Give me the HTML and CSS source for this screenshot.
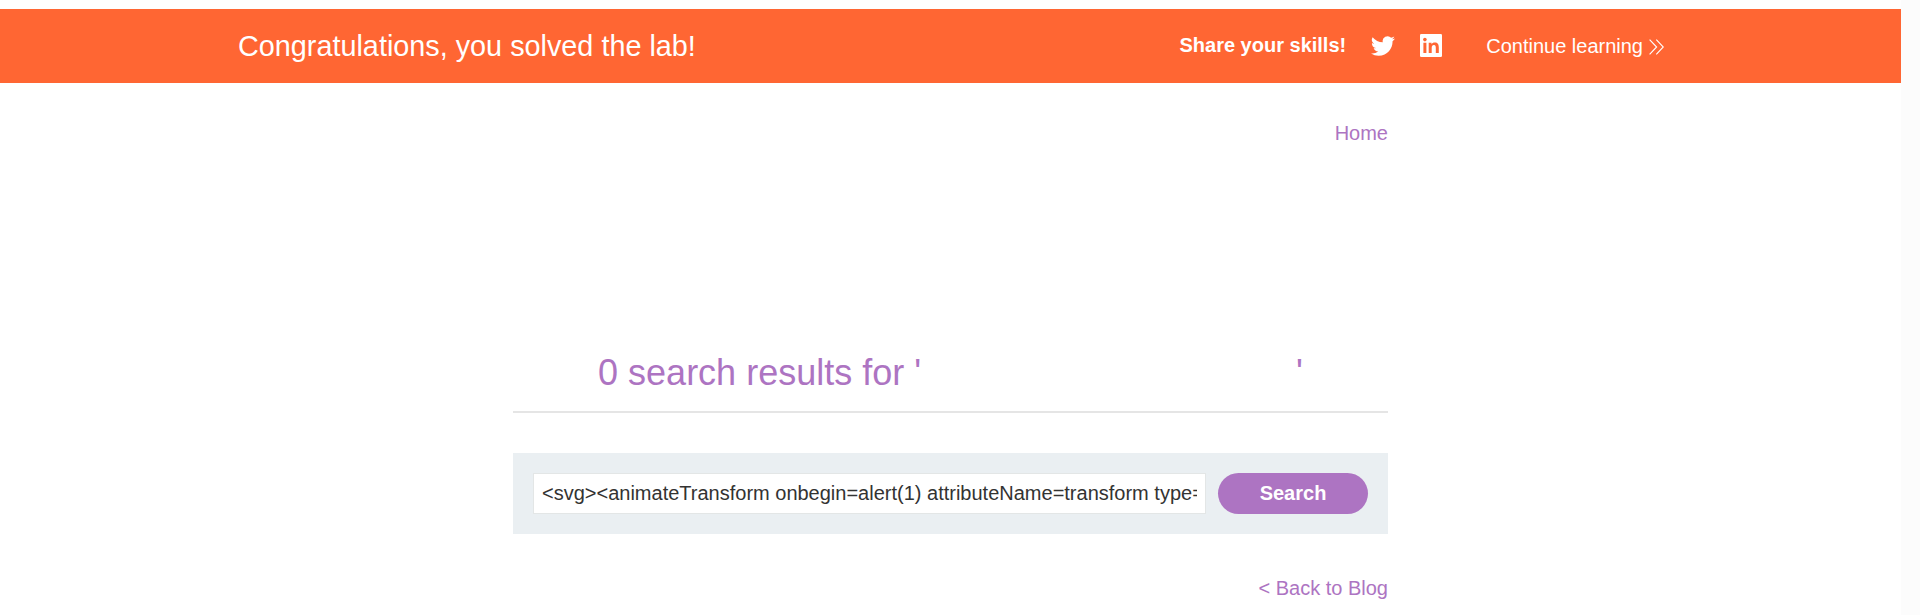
FILE: index.html
```html
<!DOCTYPE html>
<html lang="en">
<head>
<meta charset="utf-8">
<title>Search results</title>
<link rel="stylesheet" href="styles.css">
</head>
<body>
<div class="page">
  <section class="banner">
    <h4 class="banner-title">Congratulations, you solved the lab!</h4>
    <div class="banner-actions">
      <span class="share">Share your skills!</span>
      <a class="social twitter"><svg width="24" height="21" viewBox="0 0 24 21" preserveAspectRatio="none"><path fill="#fff" d="M23.95 3.57a10 10 0 0 1-2.82.77 4.96 4.96 0 0 0 2.16-2.72 9.9 9.9 0 0 1-3.13 1.19 4.92 4.92 0 0 0-8.38 4.48A13.94 13.94 0 0 1 1.64 2.15a4.92 4.92 0 0 0 1.52 6.57 4.9 4.9 0 0 1-2.23-.61v.06a4.92 4.92 0 0 0 3.95 4.83 5 5 0 0 1-2.22.08 4.94 4.94 0 0 0 4.6 3.42A9.87 9.87 0 0 1 0 18.54a13.99 13.99 0 0 0 7.55 2.21c9.06 0 14-7.5 14-13.98 0-.21 0-.42-.02-.63a9.94 9.94 0 0 0 2.46-2.55z"/></svg></a>
      <a class="social linkedin"><svg width="22" height="23" viewBox="0 0 22 23"><rect width="22" height="23" rx="1.3" fill="#fff"/><g fill="#ff6633"><circle cx="4.9" cy="5.6" r="1.8"/><path d="M3.4 8.8h3v10.300h-3zM8.700 8.800h2.800v1.400c.6-1 1.700-1.700 3.200-1.700 3.200 0 4.100 2.100 4.100 4.900v5.700h-3v-5.100c0-1.400-.1-3-1.900-3s-2.200 1.400-2.200 2.900v5.200H8.700z"/></g></svg></a>
      <a class="continue"><span>Continue learning</span><svg width="15" height="16" viewBox="0 0 15 16" fill="none" stroke="#fff" stroke-width="1.15"><path d="M.6.700 7.600 8l-7 7.300M7.300.700l7 7.300-7 7.300"/></svg></a>
    </div>
  </section>
  <main class="container">
    <nav class="nav"><a>Home</a></nav>
    <header class="results">
      <h1><span>0 search results for '</span><span class="gap"></span><span>'</span></h1>
    </header>
    <form class="search">
      <input class="field" type="text" value="&lt;svg&gt;&lt;animateTransform onbegin=alert(1) attributeName=transform type=">
      <button class="button" type="button">Search</button>
    </form>
    <div class="back"><a>&lt; Back to Blog</a></div>
  </main>
</div>
</body>
</html>
```
FILE: styles.css
```css
* { box-sizing: border-box; }
html { background: #fcfcfc; }
body {
  margin: 0;
  height: 615px;
  overflow: hidden;
  font: 20px/24px "Liberation Sans", Arial, sans-serif;
  color: #333332;
}
.page {
  width: 1901px;
  height: 615px;
  padding-top: 9px;
  background: #fff;
}
.banner {
  display: flex;
  justify-content: space-between;
  height: 74px;
  padding: 0 237px 0 238px;
  background: #ff6633;
  color: #fff;
}
.banner-title {
  margin: 20px 0 0;
  font-size: 28.8px;
  line-height: 34px;
  font-weight: 400;
}
.banner-actions { display: flex; align-items: flex-start; }
.share { margin-top: 24px; font-weight: 700; }
.social { display: flex; margin-top: 25px; }
.twitter { margin-left: 25px; }
.twitter svg { margin-top: 1px; }
.linkedin { margin-left: 25px; }
.continue { display: flex; align-items: center; gap: 6px; margin: 25px 0 0 44px; }
.continue svg { margin-top: 1px; }
.container { width: 875px; margin-left: 513px; }
.nav, .back { color: #ad74c2; text-align: right; }
.nav { padding-top: 38px; }
.results {
  margin-top: 207px;
  height: 61px;
  border-bottom: 2px solid #e5e5e5;
}
h1 {
  display: flex;
  justify-content: center;
  margin: 0;
  font-size: 36px;
  line-height: 42px;
  font-weight: 400;
  color: #ad74c2;
}
.gap { width: 375px; }
.search {
  display: flex;
  gap: 12px;
  height: 81px;
  margin-top: 40px;
  padding: 20px;
  background: #eaeff2;
}
.field {
  width: 673px;
  height: 41px;
  padding: 0 8px;
  border: 1px solid #e3e6e6;
  background: #fff;
  font: inherit;
  color: #333332;
}
.button {
  width: 150px;
  height: 41px;
  padding: 0 0 2px;
  border: 0;
  border-radius: 21px;
  background: #ad74c2;
  color: #fff;
  font: inherit;
  font-weight: 700;
}
.back { margin-top: 42px; }
```
